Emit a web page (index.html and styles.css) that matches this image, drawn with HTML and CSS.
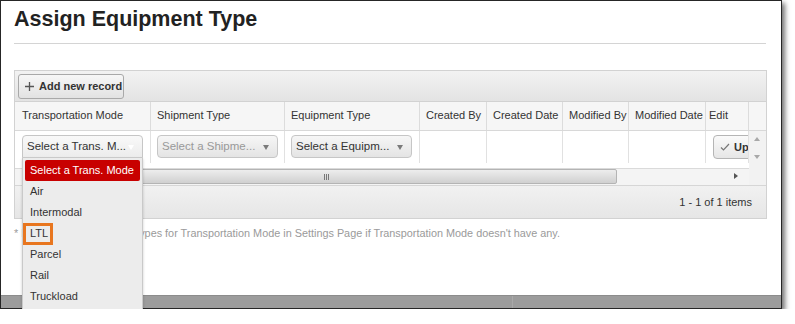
FILE: index.html
```html
<!DOCTYPE html>
<html lang="en">

<head>
  <meta charset="UTF-8">
  <title>Assign Equipment Type</title>
  <link rel="stylesheet" href="styles.css">
</head>

<body>
  <div class="window">
    <h1 class="title">Assign Equipment Type</h1>
    <div class="rule"></div>

    <div class="grid">
      <div class="toolbar">
        <button class="add-btn">
          <svg width="9" height="9" viewBox="0 0 9 9"><path d="M4.5 0v9M0 4.5h9" stroke="#555" stroke-width="1.3"/></svg>
          Add new record
        </button>
      </div>

      <div class="cols head">
        <div class="th">Transportation Mode</div>
        <div class="th">Shipment Type</div>
        <div class="th">Equipment Type</div>
        <div class="th">Created By</div>
        <div class="th">Created Date</div>
        <div class="th">Modified By</div>
        <div class="th">Modified Date</div>
        <div class="th th-edit">Edit</div>
        <div class="th th-last"></div>
      </div>

      <div class="cols body">
        <div class="td"><div class="select open">Select a Trans. M...<span class="caret light"></span></div></div>
        <div class="td"><div class="select disabled">Select a Shipme...<span class="caret"></span></div></div>
        <div class="td"><div class="select">Select a Equipm...<span class="caret"></span></div></div>
        <div class="td"></div>
        <div class="td"></div>
        <div class="td"></div>
        <div class="td"></div>
        <div class="td td-edit">
          <button class="update-btn">
            <svg width="10" height="8" viewBox="0 0 10 8"><path d="M1 4.5l2.5 2.5L9 1" fill="none" stroke="#777" stroke-width="1.2"/></svg>
            Up
          </button>
        </div>
        <div class="vscroll">
          <span class="arrow-up"></span>
          <span class="arrow-down"></span>
        </div>
      </div>

      <div class="hscroll">
        <div class="track">
          <div class="thumb"><span class="grip"></span></div>
          <span class="arrow-right"></span>
        </div>
        <div class="corner"></div>
      </div>

      <div class="pager">1 - 1 of 1 items</div>
    </div>

    <p class="note">* Please add Equipment Types for Transportation Mode in Settings Page if Transportation Mode doesn't have any.</p>

    <div class="statusbar">
      <div class="status-cell"></div>
      <div class="status-cell"></div>
    </div>

    <ul class="dropdown-list">
      <li class="selected">Select a Trans. Mode</li>
      <li>Air</li>
      <li>Intermodal</li>
      <li class="marked"><span class="mark"></span>LTL</li>
      <li>Parcel</li>
      <li>Rail</li>
      <li>Truckload</li>
    </ul>
  </div>
</body>

</html>
```

FILE: styles.css
```css
body {
  margin: 0;
  background: #fff;
  font-family: "Liberation Sans", Arial, sans-serif;
  color: #333;
}

.window {
  position: relative;
  box-sizing: border-box;
  width: 782px;
  height: 309px;
  border: 1px solid #262626;
  background: #fff;
  box-shadow: 3px 3px 5px rgba(0, 0, 0, 0.55);
  display: flex;
  flex-direction: column;
  padding-top: 5px;
}

.title {
  margin: 0 0 0 13px;
  font-size: 21.5px;
  line-height: 26px;
  font-weight: bold;
  color: #222;
}

.rule {
  height: 1px;
  background: #d4d4d4;
  margin: 11px 0 0 13px;
  width: 752px;
}

/* grid */
.grid {
  margin: 26px 0 0 13px;
  width: 753px;
  box-sizing: border-box;
  border: 1px solid #d2d2d2;
}

.toolbar {
  height: 30px;
  border-bottom: 1px solid #d2d2d2;
  background: linear-gradient(#f2f2f2, #e3e3e3);
  display: flex;
  align-items: center;
  padding-left: 3px;
}

.add-btn {
  display: flex;
  align-items: center;
  gap: 5px;
  height: 25px;
  width: 106px;
  padding: 0 0 0 6px;
  border: 1px solid #a9a9a9;
  border-radius: 3px;
  background: linear-gradient(#f7f7f7, #e2e2e2);
  font-family: inherit;
  font-size: 11px;
  font-weight: bold;
  color: #333;
}

.cols {
  display: grid;
  grid-template-columns: 136px 134px 135px 67px 76px 66px 77px 43px 17px;
}

.head {
  height: 28px;
  border-bottom: 1px solid #d8d8d8;
  background: #f6f6f6;
}

.th {
  border-right: 1px solid #dcdcdc;
  padding-left: 6px;
  font-size: 11px;
  line-height: 27px;
  white-space: nowrap;
  overflow: hidden;
}

.th:first-child {
  padding-left: 7px;
}

.th-edit {
  padding-left: 3px;
}

.th-last {
  border-right: none;
}

.body {
  height: 37px;
}

.td {
  height: 32px;
  border-right: 1px solid #e1e1e1;
  padding: 4px 0 0 6px;
  box-sizing: border-box;
  overflow: hidden;
}

.td:first-child {
  padding-left: 7px;
}

.select {
  position: relative;
  box-sizing: border-box;
  width: 121px;
  height: 23px;
  border: 1px solid #c6c6c6;
  border-radius: 4px;
  background: linear-gradient(#f6f6f6, #e4e4e4);
  font-size: 11.5px;
  line-height: 21px;
  padding-left: 4px;
  color: #333;
  white-space: nowrap;
}

.select.open {
  border-radius: 4px 4px 0 0;
  background: linear-gradient(#f9f9f9, #ececec);
}

.select.disabled {
  color: #999;
}

.caret {
  position: absolute;
  right: 8px;
  top: 9px;
  border-left: 3.5px solid transparent;
  border-right: 3.5px solid transparent;
  border-top: 5px solid #7a7a7a;
}

.caret.light {
  border-top-color: #fff;
}

.td-edit {
  padding-left: 7px;
}

.update-btn {
  display: flex;
  align-items: center;
  gap: 4px;
  width: 60px;
  height: 24px;
  padding: 0 0 0 6px;
  border: 1px solid #b5b5b5;
  border-radius: 4px;
  background: linear-gradient(#fafafa, #e6e6e6);
  font-family: inherit;
  font-size: 11px;
  font-weight: bold;
  color: #333;
}

.vscroll {
  position: relative;
  background: #f2f2f2;
}

.arrow-up,
.arrow-down {
  position: absolute;
  left: 5px;
  border-left: 3.5px solid transparent;
  border-right: 3.5px solid transparent;
}

.arrow-up {
  top: 6px;
  border-bottom: 4px solid #a8a8a8;
}

.arrow-down {
  top: 24px;
  border-top: 4px solid #a8a8a8;
}

.hscroll {
  display: flex;
  height: 17px;
}

.track {
  position: relative;
  flex: 1;
  background: #f4f4f4;
  border-top: 1px solid #dadada;
}

.thumb {
  position: absolute;
  left: 16px;
  top: 0;
  width: 586px;
  height: 15px;
  box-sizing: border-box;
  border: 1px solid #b4b4b4;
  border-radius: 2px;
  background: linear-gradient(#ededed, #d0d0d0);
}

.grip {
  position: absolute;
  left: 292px;
  top: 4px;
  width: 1px;
  height: 6px;
  background: #777;
  box-shadow: 2px 0 0 #777, 4px 0 0 #777;
}

.arrow-right {
  position: absolute;
  right: 11px;
  top: 4px;
  border-top: 3.5px solid transparent;
  border-bottom: 3.5px solid transparent;
  border-left: 4px solid #555;
}

.corner {
  width: 17px;
  background: #f2f2f2;
}

.pager {
  height: 32px;
  border-top: 1px solid #d6d6d6;
  background: linear-gradient(#f1f1f1, #e6e6e6);
  font-size: 11px;
  line-height: 32px;
  text-align: right;
  padding-right: 14px;
}

.note {
  margin: 7px 0 0 13px;
  font-size: 10.85px;
  line-height: 14px;
  color: #9a9a9a;
}

.statusbar {
  margin-top: auto;
  height: 12px;
  display: flex;
  background: #9c9c9c;
  border-top: 1px solid #8c8c8c;
}

.status-cell {
  width: 511px;
  border-right: 1px solid #a9a9a9;
}

.status-cell:last-child {
  flex: 1;
  border-right: none;
}

/* open dropdown */
.dropdown-list {
  position: absolute;
  left: 21px;
  top: 156px;
  width: 121px;
  box-sizing: border-box;
  margin: 0;
  padding: 2px 2px 4px;
  list-style: none;
  background: #ececec;
  border: 1px solid #c9c9c9;
  border-radius: 0 0 3px 3px;
  box-shadow: 0 2px 3px rgba(0, 0, 0, 0.2);
}

.dropdown-list li {
  position: relative;
  height: 21px;
  line-height: 21px;
  padding-left: 5px;
  font-size: 11px;
  color: #333;
  white-space: nowrap;
}

.dropdown-list li.selected {
  background: #c80000;
  color: #fff;
  border-radius: 2px;
}

.mark {
  position: absolute;
  left: -2px;
  top: 0;
  width: 30px;
  height: 22px;
  box-sizing: border-box;
  border: 3px solid #e8761f;
}
```
